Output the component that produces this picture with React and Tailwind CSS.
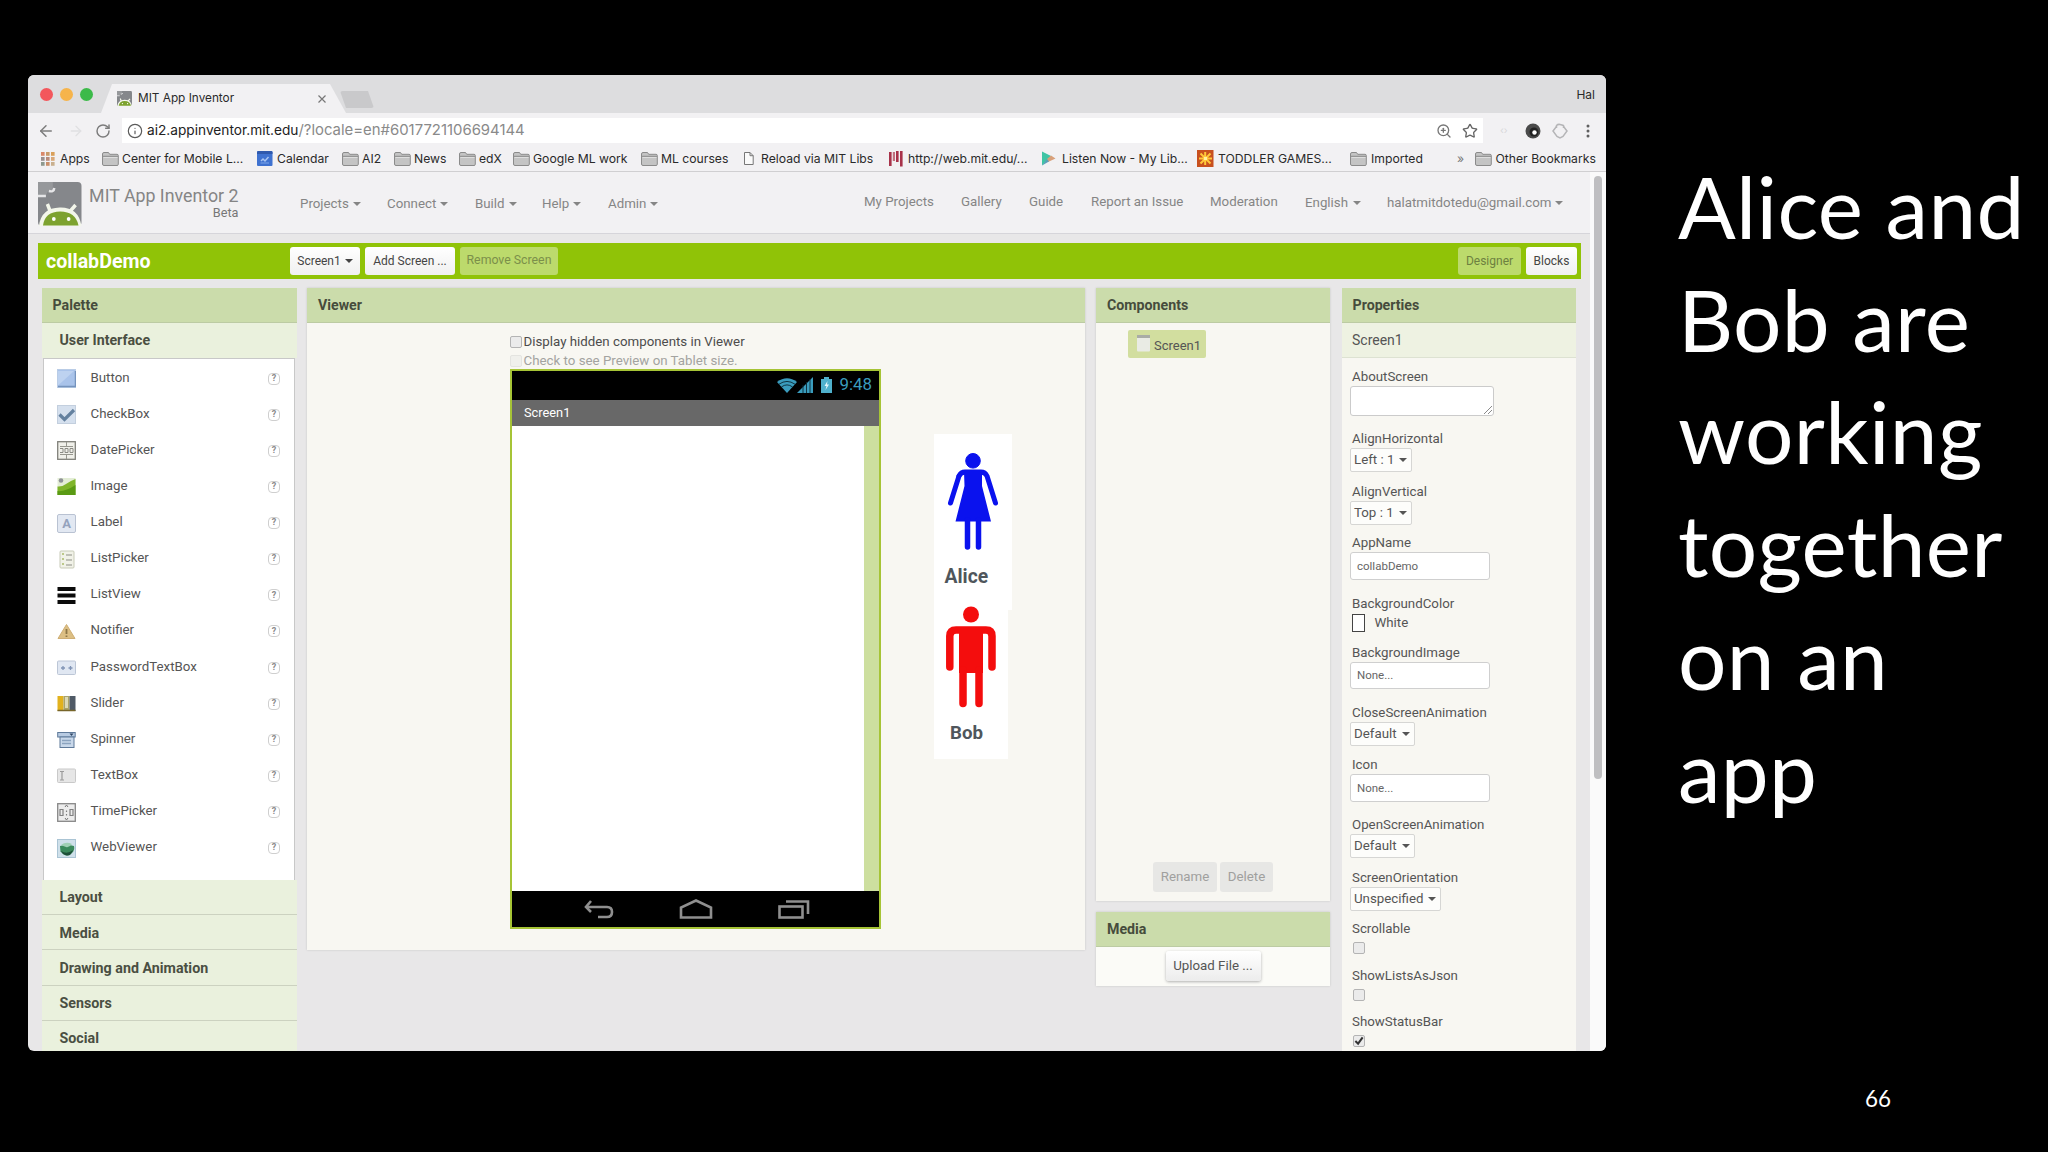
import { RotateCw, Info, ZoomIn, Star, ArrowLeft, ArrowRight } from "lucide-react"

const bookmarks = [
    { label: "Apps", icon: "apps", box: "w-[61px]", slot: "w-[19px]" },
    { label: "Center for Mobile L...", icon: "folder", box: "w-[155px]", slot: "w-[20px]" },
    { label: "Calendar", icon: "calendar", box: "w-[85px]", slot: "w-[20px]" },
    { label: "AI2", icon: "folder", box: "w-[52px]", slot: "w-[20px]" },
    { label: "News", icon: "folder", box: "w-[65px]", slot: "w-[20px]" },
    { label: "edX", icon: "folder", box: "w-[54px]", slot: "w-[20px]" },
    { label: "Google ML work", icon: "folder", box: "w-[128px]", slot: "w-[20px]" },
    { label: "ML courses", icon: "folder", box: "w-[103px]", slot: "w-[20px]" },
    { label: "Reload via MIT Libs", icon: "doc", box: "w-[145px]", slot: "w-[17px]" },
    { label: "http://web.mit.edu/...", icon: "mit", box: "w-[153px]", slot: "w-[19px]" },
    { label: "Listen Now - My Lib...", icon: "play", box: "w-[155px]", slot: "w-[20px]" },
    { label: "TODDLER GAMES...", icon: "toddler", box: "w-[153px]", slot: "w-[21px]" },
    { label: "Imported", icon: "folder", box: "w-[107px]", slot: "w-[21px]" },
]

const menus = [
    { label: "Projects", box: "w-[87px]" },
    { label: "Connect", box: "w-[88px]" },
    { label: "Build", box: "w-[67px]" },
    { label: "Help", box: "w-[66px]" },
    { label: "Admin", box: "w-[60px]" },
]

const links = [
    { label: "My Projects", box: "w-[97px]" },
    { label: "Gallery", box: "w-[68px]" },
    { label: "Guide", box: "w-[62px]" },
    { label: "Report an Issue", box: "w-[119px]" },
    { label: "Moderation", box: "w-[95px]" },
]

const palette = [
    "Button", "CheckBox", "DatePicker", "Image", "Label", "ListPicker", "ListView",
    "Notifier", "PasswordTextBox", "Slider", "Spinner", "TextBox", "TimePicker", "WebViewer",
]

const drawers = ["Layout", "Media", "Drawing and Animation", "Sensors", "Social"]

const properties = [
    { name: "AboutScreen", type: "area", box: "h-[62px]" },
    { name: "AlignHorizontal", type: "select", value: "Left : 1", box: "h-[52.5px]" },
    { name: "AlignVertical", type: "select", value: "Top : 1", box: "h-[51.5px]" },
    { name: "AppName", type: "text", value: "collabDemo", box: "h-[60.5px]" },
    { name: "BackgroundColor", type: "color", value: "White", box: "h-[49px]" },
    { name: "BackgroundImage", type: "text", value: "None...", box: "h-[60px]" },
    { name: "CloseScreenAnimation", type: "select", value: "Default", box: "h-[52.5px]" },
    { name: "Icon", type: "text", value: "None...", box: "h-[60px]" },
    { name: "OpenScreenAnimation", type: "select", value: "Default", box: "h-[52.5px]" },
    { name: "ScreenOrientation", type: "select", value: "Unspecified", box: "h-[51.5px]" },
    { name: "Scrollable", type: "check", box: "h-[46.5px]" },
    { name: "ShowListsAsJson", type: "check", box: "h-[46px]" },
    { name: "ShowStatusBar", type: "check", checked: true, box: "h-[40px]" },
]

function BookmarkIcon({ name }) {
    if (name === "apps") {
        const colors = ["#d9886a", "#c99a6a", "#d9a05a", "#9a8f8f", "#b88a7a", "#d9a878", "#8f9a8f", "#c98f6a", "#c9b08f"]
        return (
            <svg width="14" height="14" viewBox="0 0 14 14">
                {colors.map((c, i) => (
                    <rect key={i} x={(i % 3) * 5} y={Math.floor(i / 3) * 5} width="3.6" height="3.8" fill={c} />
                ))}
            </svg>
        )
    }
    if (name === "calendar") {
        return (
            <svg width="16" height="15" viewBox="0 0 16 15">
                <rect width="15.5" height="15" rx="1" fill="#3f72d0" />
                <path d="M0 1.5Q0 0 1.5 0H14Q15.500 0 15.500 1.500V3H0Z" fill="#2f59ad" />
                <path d="M4 10l2-2 2 2 3.500-4" stroke="#a8c4f2" strokeWidth="1.500" fill="none" />
                <path d="M3.500 12h8.500" stroke="#7ea6ea" strokeWidth="1" />
            </svg>
        )
    }
    if (name === "doc") {
        return (
            <svg width="10" height="13" viewBox="0 0 10 13" fill="#fafafa" stroke="#777" strokeWidth="1">
                <path d="M.5.5h5.500l3.200 3.200v8.800H.5z" />
                <path d="M6 .5v3.200h3.200" fill="none" />
            </svg>
        )
    }
    if (name === "mit") {
        return (
            <svg width="14" height="16" viewBox="0 0 14 16" fill="#a8324a">
                <rect x="0" y="1" width="2.600" height="14" />
                <rect x="3.800" y="1" width="2.200" height="9" fill="#c0707f" />
                <rect x="7" y="0" width="2.600" height="11" />
                <rect x="11" y="0" width="2.600" height="15.500" />
            </svg>
        )
    }
    if (name === "play") {
        return (
            <svg width="14" height="15" viewBox="0 0 14 15">
                <path d="M0 .5L9 5 6.500 8 0 14.500z" fill="#3fc4a4" />
                <path d="M9 4.500l4.500 3L6 11 5 8z" fill="#d8a07a" />
                <path d="M0 14.500L5 8l2 2.500z" fill="#5a9fb8" />
            </svg>
        )
    }
    if (name === "toddler") {
        return (
            <svg width="17" height="17" viewBox="0 0 17 17">
                <rect width="16.500" height="17" fill="#c8501e" />
                <path d="M8.200 2v13M2 8.500h13M3.500 3.500l10 10M13.500 3.500l-10 10" stroke="#ffc93a" strokeWidth="2" />
                <rect x="7" y="7" width="3" height="3" fill="#fff0a0" />
            </svg>
        )
    }
    return (
        <svg width="17" height="14" viewBox="0 0 17 14">
            <path d="M.5 2Q.5.5 2 .5h4.500l1.200 1.800H15q1.300 0 1.300 1.200v8.700q0 1.300-1.300 1.300H2Q.5 13.500.5 12z" fill="#c4c4c4" stroke="#8b8b8b" />
            <path d="M1 4.300h15" stroke="#8b8b8b" />
            <path d="M1.500 5.500h14" stroke="#dedede" />
        </svg>
    )
}

function ComponentIcon({ name }) {
    switch (name) {
        case "Button":
            return (
                <>
                    <rect x=".5" y=".5" width="18" height="18" fill="#a9c3ea" stroke="#b9cce6" />
                    <path d="M1 16.500V2h16z" fill="#bdd2f0" />
                    <path d="M1 17.500h17.500V2" stroke="#7593bd" strokeWidth="1.500" fill="none" />
                </>
            )
        case "CheckBox":
            return (
                <>
                    <rect x=".5" y=".5" width="18" height="18" fill="#d5e0ee" stroke="#c3cfde" />
                    <path d="M2.500 9.500l5 5 9.500-9.500" stroke="#64819f" strokeWidth="3.200" fill="none" />
                </>
            )
        case "DatePicker":
            return (
                <>
                    <rect x=".7" y=".7" width="17.600" height="17.600" fill="#f0f0ea" stroke="#80807a" strokeWidth="1.300" />
                    <path d="M9.500 1v4M9.500 14v4M3 5.500h13M3 13.500h13" stroke="#96968e" />
                    <path d="M3 7.500h3v4H3M8 7.500h3v4H8zM13 7.500h3v4h-3z" stroke="#8a8a84" fill="none" />
                </>
            )
        case "Image":
            return (
                <>
                    <rect x=".5" y="1" width="18" height="17" fill="#e3edd6" />
                    <path d="M.5 18V9.500Q5 10 9 7t9.500-5V18z" fill="#7fb52a" />
                    <path d="M.5 18v-4Q8 15 18.500 8v10z" fill="#5a9a14" />
                    <circle cx="4" cy="3.500" r="2.300" fill="#8f9296" />
                </>
            )
        case "Label":
            return (
                <>
                    <rect x=".5" y=".5" width="18" height="18" rx="1.500" fill="#e2e8f2" stroke="#b9c2d2" />
                    <text x="9.500" y="14" textAnchor="middle" fontSize="13" fontWeight="700" fontFamily="Roboto, sans-serif" fill="#94a2bd">A</text>
                </>
            )
        case "ListPicker":
            return (
                <>
                    <rect x="3" y="1" width="14" height="17" rx="1" fill="#f1f2e8" stroke="#c8cbb8" />
                    <path d="M5 4h2M5 9h2M5 14h2" stroke="#bcc98a" strokeWidth="2" />
                    <path d="M9 5h6M9 10h6M9 15h6" stroke="#aeb0a6" strokeWidth="1.300" />
                </>
            )
        case "ListView":
            return <path d="M.5 3h18M.5 9.500h18M.5 16h18" stroke="#0b0b0b" strokeWidth="3.800" />
        case "Notifier":
            return (
                <>
                    <path d="M9.500 2.500L18 16.500H1z" fill="#dcbf84" stroke="#cfae74" strokeLinejoin="round" />
                    <path d="M9.500 7v5M9.500 13.500v1.500" stroke="#8c7647" strokeWidth="1.800" />
                </>
            )
        case "PasswordTextBox":
            return (
                <>
                    <rect x=".5" y="3" width="18" height="13.500" rx="1" fill="#e0e7f2" stroke="#bcc6d6" />
                    <path d="M4 10h4M6 8v4M11.500 10h4M13.500 8v4" stroke="#8094b5" strokeWidth="1.300" />
                </>
            )
        case "Slider":
            return (
                <>
                    <rect x=".5" y="2" width="6" height="15" fill="#e2b21e" />
                    <rect x="6.500" y="2" width="6" height="15" fill="#a9a36c" />
                    <rect x="8" y="3" width="3" height="11" fill="#dcd9b8" />
                    <rect x="12.500" y="2" width="6" height="15" fill="#4f5a66" />
                    <path d="M.5 16.500h18" stroke="#77652a" strokeWidth="1.500" />
                </>
            )
        case "Spinner":
            return (
                <>
                    <rect x=".7" y="2.500" width="17.500" height="4.500" fill="#b8cbe2" stroke="#5f7a9a" />
                    <path d="M12.500 3.500h4l-2 2.500z" fill="#2f4664" />
                    <rect x="3" y="7" width="14" height="10.500" fill="#c9d8ea" stroke="#5f7a9a" />
                    <path d="M5 10.500h9M5 13.500h9" stroke="#8ba3bf" strokeWidth="1.300" />
                </>
            )
        case "TextBox":
            return (
                <>
                    <rect x=".5" y="3" width="18" height="13.500" rx="1" fill="#e6e6e6" stroke="#c9c9c9" />
                    <path d="M3 5.500h4M5 5.500v8.500M3 14h4" stroke="#9b9b9b" strokeWidth="1.200" />
                </>
            )
        case "TimePicker":
            return (
                <>
                    <rect x=".7" y=".7" width="17.600" height="17.600" fill="#ececec" stroke="#878787" strokeWidth="1.300" />
                    <path d="M8 4l1.500-2L11 4M8 15l1.500 2 1.500-2" stroke="#777" fill="none" />
                    <path d="M3 6.500h3v6H3zM13 6.500h3v6h-3zM9.500 7.500v1.500M9.500 11v1.500" stroke="#808080" strokeWidth="1.200" fill="none" />
                </>
            )
        default:
            return (
                <>
                    <rect x=".5" y=".5" width="18" height="18" fill="#cfe0ea" stroke="#aac4d4" />
                    <path d="M3 7Q10 5 17 7q1 4-2 7t-6 2.500-5.500-4z" fill="#3a8a5c" />
                    <path d="M4 6Q9 2 15 5q-3 4-6 3t-5-2z" fill="#9fd0b4" />
                    <path d="M4 12q6 4 12-1-2 6-6 5.500t-6-4.500z" fill="#1d4f38" />
                </>
            )
    }
}

function Logo({ className }) {
    return (
        <svg className={className} viewBox="0 0 44 44" preserveAspectRatio="none">
            <rect width="44" height="44" rx="4" fill="#85878b" />
            <path d="M0 0h15v7q-1 3-5 2.500L8 13H0z" fill="#96989b" />
            <path d="M0 14h8M11 9q5 1.500 5.500-3" stroke="#e6e6e8" strokeWidth="2.500" fill="none" />
            <path d="M3 44Q5 28 22 27.500T42 44z" fill="#f3f6ea" stroke="#f3f6ea" strokeWidth="4" />
            <path d="M13 31l-3.500-9M31 31l7-8" stroke="#f3f6ea" strokeWidth="3.500" />
            <path d="M5 43.500Q7 29.500 22.500 29.500T41 43.500z" fill="#7da22f" />
            <circle cx="16" cy="37" r="1.900" fill="#fff" />
            <circle cx="31" cy="37" r="1.900" fill="#fff" />
        </svg>
    )
}

function Caret({ className = "" }) {
    return <span className={`inline-block border-x-4 border-t-4 border-x-transparent border-t-current ${className}`} />
}

function PanelHeader({ children }) {
    return (
        <div className="flex h-[35px] shrink-0 items-center border-b border-[#bccba3] bg-[#cbdcab] px-[11px] pt-[2px] text-[14.2px] font-bold text-[#464c3c]">
            {children}
        </div>
    )
}

function Check({ checked }) {
    return (
        <span className="flex size-3 items-center justify-center rounded-[2px] border border-[#b4b4b4] bg-[#ebebeb]">
            {checked && (
                <svg width="11" height="11" viewBox="0 0 11 11">
                    <path d="M1.500 6l3 3L9.500 2" stroke="#333" strokeWidth="2.200" fill="none" />
                </svg>
            )}
        </span>
    )
}

function PropertyEditor({ type, value, checked }) {
    if (type === "area") {
        return (
            <div className="mt-px ml-[-2px] flex h-[30px] w-36 items-end justify-end rounded-[3px] border border-[#cbcbcb] bg-white p-px">
                <svg width="8" height="8" viewBox="0 0 8 8" stroke="#8a8a8a">
                    <path d="M0 8l8-8M4 8l4-4" />
                </svg>
            </div>
        )
    }
    if (type === "select") {
        return (
            <div className="mt-px ml-[-2px] inline-flex h-6 items-center rounded-[2px] border border-[#d6d6d4] bg-[#fdfdfb] pr-[4px] pl-[3px] whitespace-pre">
                {value}
                <Caret className="ml-[5px]" />
            </div>
        )
    }
    if (type === "text") {
        return (
            <div className="mt-px ml-[-2px] flex h-[27.5px] w-[140px] items-center rounded-[3px] border border-[#cfcfcf] bg-white pl-[6px] text-[11.5px] text-[#666]">
                {value}
            </div>
        )
    }
    if (type === "color") {
        return (
            <div className="mt-[2px] flex items-center">
                <span className="mr-[9.5px] h-[18px] w-[13px] border-[1.5px] border-[#444] bg-white" />
                {value}
            </div>
        )
    }
    return <div className="mt-[5px] ml-[.5px]"><Check checked={checked} /></div>
}

function BrowserChrome() {
    return (
        <div className="shrink-0 font-['Inter',sans-serif] text-[12.2px] text-[#2a2a2a]">
            <div className="flex h-[38px] bg-[#dddddf]">
                <div className="mt-[13px] ml-3 flex gap-[7px]">
                    <span className="size-[13px] rounded-full bg-[#f3575c]" />
                    <span className="size-[13px] rounded-full bg-[#f6b44b]" />
                    <span className="size-[13px] rounded-full bg-[#3cba49]" />
                </div>
                <div className="mt-[9px] ml-[8px] flex h-[29px] w-[245px] items-center bg-[#f2f1f3] [clip-path:polygon(11px_0,229px_0,245px_100%,0_100%)]">
                    <Logo className="ml-[16px] h-[15px] w-[15px]" />
                    <span className="ml-[6px] text-[11.8px]">MIT App Inventor</span>
                    <svg className="ml-[84px]" width="8" height="8" viewBox="0 0 8 8" stroke="#777" strokeWidth="1.200">
                        <path d="M.5.5l7 7M7.500.5l-7 7" />
                    </svg>
                </div>
                <div className="mt-[16px] ml-[-6px] h-[17px] w-[34px] rounded-[3px] bg-[#c9c9cb] [clip-path:polygon(0_0,28px_0,34px_100%,6px_100%)]" />
                <span className="mt-[11px] mr-[11px] ml-auto text-[12px]">Hal</span>
            </div>
            <div className="flex h-[31px] items-center bg-[#f2f1f3] pt-[4px]">
                <ArrowLeft className="ml-[9px] text-[#7d7d7d]" size={18} strokeWidth={2} />
                <ArrowRight className="ml-[13px] text-[#e0e0e2]" size={16} strokeWidth={2} />
                <RotateCw className="ml-[11px] text-[#7c7c7c]" size={16} strokeWidth={2.2} />
                <div className="ml-[11px] flex h-[25px] w-[1361px] items-center bg-white">
                    <Info className="ml-[5px] text-[#5c5c5c]" size={16} strokeWidth={1.800} />
                    <span className="ml-[4px] text-[13.7px] text-[#222]">ai2.appinventor.mit.edu</span>
                    <span className="text-[14.9px] text-[#8a8a8a]">/?locale=en#6017721106694144</span>
                    <ZoomIn className="mr-[10px] ml-auto text-[#777]" size={16} strokeWidth={2} />
                    <Star className="mr-[5px] text-[#666]" size={16} strokeWidth={2} />
                </div>
                <span className="ml-[17px] text-[10px] text-[#d8d8da]">‹›</span>
                <svg className="ml-[17px]" width="16" height="16" viewBox="0 0 16 16">
                    <circle cx="8" cy="8" r="7.500" fill="#4a4a4a" />
                    <circle cx="9" cy="9" r="4.500" fill="#222" />
                    <circle cx="9.500" cy="9.500" r="2.200" fill="#fff" />
                </svg>
                <svg className="ml-[11px]" width="16" height="16" viewBox="0 0 16 16" fill="none" stroke="#b5b5b7" strokeWidth="1.500">
                    <path d="M4.500 3.500L1 8l4 5.500 3 1.500 3-1.500L15 8l-3.500-4.500" />
                    <path d="M4.500 5V2.500Q6 1 8 1.500t3.500 1V5" />
                </svg>
                <svg className="ml-[18px]" width="4" height="14" viewBox="0 0 4 14" fill="#5f5f5f">
                    <circle cx="2" cy="2" r="1.500" />
                    <circle cx="2" cy="7" r="1.500" />
                    <circle cx="2" cy="12" r="1.500" />
                </svg>
            </div>
            <div className="flex h-7 items-center border-b border-[#d0cfd1] bg-[#f2f1f3] pt-[3px] pl-[13px] whitespace-nowrap">
                {bookmarks.map((b) => (
                    <div key={b.label} className={`flex shrink-0 items-center ${b.box}`}>
                        <span className={`shrink-0 ${b.slot}`}><BookmarkIcon name={b.icon} /></span>
                        {b.label}
                    </div>
                ))}
                <span className="w-[18px] text-[#777]">»</span>
                <span className="w-[20.5px] shrink-0"><BookmarkIcon name="folder" /></span>
                Other Bookmarks
            </div>
        </div>
    )
}

function Palette() {
    return (
        <div className="flex w-[255px] flex-col">
            <PanelHeader>Palette</PanelHeader>
            <div className="flex h-[35px] shrink-0 items-center bg-[#eaf1dd] pt-px pl-[18px] text-[14.2px] font-bold text-[#4a4f42]">User Interface</div>
            <div className="mx-[1.5px] h-[522.5px] shrink-0 border-x border-t border-[#c8c8c8] bg-white pt-[2px]">
                {palette.map((name) => (
                    <div key={name} className="flex h-[36.14px] items-center pr-[14px] pl-[13px]">
                        <svg width="19" height="19" viewBox="0 0 19 19" fill="none">
                            <ComponentIcon name={name} />
                        </svg>
                        <span className="mb-[2px] ml-[14.5px]">{name}</span>
                        <span className="ml-auto flex size-[12px] items-center justify-center rounded-[4px] border border-[#cfcfcf] text-[9px] font-bold text-[#8a8a8a]">?</span>
                    </div>
                ))}
            </div>
            {drawers.map((name) => (
                <div key={name} className="flex h-[35.2px] shrink-0 items-center border-b border-[#ccd2c0] bg-[#eaf1dd] pt-[2px] pl-[18px] text-[14.25px] font-bold text-[#4a4f42]">{name}</div>
            ))}
        </div>
    )
}

function Phone() {
    return (
        <div className="flex h-[560px] w-[371.5px] flex-col border-2 border-[#a6c436] bg-white">
            <div className="flex h-[29px] items-center bg-black pr-[7px] text-[16.9px] text-[#3a9cbd]">
                <svg className="ml-auto" width="20" height="15" viewBox="0 0 20 15" fill="#3a9cbd">
                    <path d="M0 4Q10-3.500 20 4L10 15z" />
                    <path d="M2 6.200q8-5.500 16 0M4.500 8.900q5.500-4 11 0" stroke="#0b2833" strokeWidth=".9" fill="none" />
                </svg>
                <svg width="16" height="16" viewBox="0 0 16 16" fill="#3a9cbd">
                    <path d="M0 16L16 0v16z" />
                    <path d="M6 8v8M9.500 5v11M13 2v14" stroke="#0b2833" strokeWidth=".9" />
                </svg>
                <svg className="ml-[8px]" width="11" height="16" viewBox="0 0 11 16">
                    <path d="M3 0h5v2h3v14H0V2h3z" fill="#4fb0cc" />
                    <path d="M6.500 4L3.500 9h2L4.500 13 8 7.500H6z" fill="#e6f7fb" />
                </svg>
                <span className="ml-[7px]">9:48</span>
            </div>
            <div className="flex h-[26.5px] items-center bg-[#686868] pb-px pl-[12.5px] text-[12.8px] text-white">Screen1</div>
            <div className="flex flex-1 justify-end">
                <div className="w-[15px] bg-[#cddf9f]" />
            </div>
            <div className="flex h-[36px] items-center bg-black">
                <svg className="ml-[71px]" width="31" height="20" viewBox="0 0 31 20" fill="none" stroke="#8f8f8f" strokeWidth="2.600">
                    <path d="M3 8h21q5 0 5 5t-5 5H15" />
                    <path d="M8 2L3 8l5 5" />
                </svg>
                <svg className="ml-[65.5px]" width="34" height="20" viewBox="0 0 34 20" fill="none" stroke="#8f8f8f" strokeWidth="2.600">
                    <path d="M2 18.500V8.500L17 1.500 32 8.500v10z" />
                </svg>
                <svg className="ml-[65px]" width="32" height="20" viewBox="0 0 32 20" fill="none" stroke="#8f8f8f" strokeWidth="2.600">
                    <rect x="1.500" y="7.500" width="23" height="11" />
                    <path d="M8 2.500h22V15" />
                </svg>
            </div>
        </div>
    )
}

function Viewer() {
    return (
        <div className="ml-[10.5px] h-[662px] w-[778px] shrink-0 bg-[#f8f7f2] shadow-[0_0_2px_#c4c4c4]">
            <PanelHeader>Viewer</PanelHeader>
            <div className="pt-[10px] pl-[202.5px] text-[#4c4c4c]">
                <div className="flex h-[18.5px] items-center"><Check /><span className="ml-[2px]">Display hidden components in Viewer</span></div>
                <div className="flex h-[17.5px] items-center pt-[3px] text-[#a3a3a0]">
                    <span className="size-3 rounded-[2px] border border-[#e4e4e0] bg-[#f0f0ec]" />
                    <span className="ml-[2px]">Check to see Preview on Tablet size.</span>
                </div>
                <div className="flex items-start">
                    <Phone />
                    <div className="mt-[65px] ml-[52.5px] font-bold text-[#4f565c]">
                        <div className="flex h-[176px] w-[78px] flex-col bg-white pl-[11px]">
                            <svg className="mt-[18px] ml-[2px] shrink-0" width="52" height="98" viewBox="0 0 52 98" fill="#0a12ee" stroke="#0a12ee">
                                <circle cx="26" cy="8.800" r="7.300" />
                                <path d="M12 24Q14 20 18 20H34Q38 20 40 24L48.500 51" fill="none" strokeWidth="5" strokeLinecap="round" />
                                <path d="M12 24L3.500 51" strokeWidth="5" strokeLinecap="round" />
                                <path d="M17 19.500H35V34L44 69.500H8.500L17.500 34z" stroke="none" />
                                <path d="M20.500 68v27M31.500 68v27" strokeWidth="5.500" strokeLinecap="round" />
                            </svg>
                            <span className="mt-[15px] text-[19.3px] leading-6">Alice</span>
                        </div>
                        <div className="flex h-[149px] w-[74px] flex-col bg-white pl-[11px]">
                            <svg className="mt-[-4px] shrink-0" width="52" height="102" viewBox="0 0 52 102" fill="#f40d0d" stroke="#f40d0d">
                                <circle cx="26" cy="8.500" r="8" stroke="none" />
                                <path d="M4.800 61V30Q5 24 11 24H41Q47 24 47 30V61" fill="none" strokeWidth="7.500" strokeLinecap="round" />
                                <path d="M14 21h24v46H14z" stroke="none" />
                                <path d="M18 64v33.500M34 64v33.500" strokeWidth="7.500" strokeLinecap="round" />
                            </svg>
                            <span className="mt-[13px] ml-[5.5px] text-[18.7px] leading-6">Bob</span>
                        </div>
                    </div>
                </div>
            </div>
        </div>
    )
}

function Components() {
    return (
        <div className="ml-[11px] w-[234px] shrink-0">
            <div className="flex h-[613.5px] flex-col bg-[#f8f7f2] shadow-[0_0_2px_#c4c4c4]">
                <PanelHeader>Components</PanelHeader>
                <div className="mt-[7px] ml-8 flex h-7 w-[78px] items-center rounded-[2px] bg-[#d2de9f]">
                    <svg className="ml-[9px]" width="13" height="17" viewBox="0 0 13 17">
                        <rect y=".5" width="13" height="16" rx="1" fill="#e9ebe4" />
                        <rect width="13" height="3" fill="#a9aca6" />
                    </svg>
                    <span className="mt-[4px] ml-1 text-[13px]">Screen1</span>
                </div>
                <div className="mt-auto mb-[9px] ml-[57px] flex gap-[3px] text-[#a0a09e]">
                    <span className="flex h-[30px] w-[64px] items-center justify-center rounded-[3px] bg-[#e7e7e5]">Rename</span>
                    <span className="flex h-[30px] w-[53px] items-center justify-center rounded-[3px] bg-[#e7e7e5]">Delete</span>
                </div>
            </div>
            <div className="mt-[11px] h-[74px] bg-[#fbfbf7] shadow-[0_0_2px_#c4c4c4]">
                <PanelHeader>Media</PanelHeader>
                <span className="mx-auto mt-[4px] flex h-[29.5px] w-[95px] items-center justify-center rounded-[3px] bg-gradient-to-b from-white to-[#ececec] shadow-[0_1px_3px_#b0b0b0]">Upload File ...</span>
            </div>
        </div>
    )
}

function Properties() {
    return (
        <div className="ml-[11.5px] w-[234px] shrink-0 bg-[#f8f7f2]">
            <PanelHeader>Properties</PanelHeader>
            <div className="mb-[11px] flex h-[35.500px] items-center border-b border-[#dde2d2] bg-[#eef2e2] pt-px pl-[10.5px] text-[14px]">Screen1</div>
            {properties.map((p) => (
                <div key={p.name} className={`pl-[10.5px] leading-4 ${p.box}`}>
                    <p>{p.name}</p>
                    <PropertyEditor type={p.type} value={p.value} checked={p.checked} />
                </div>
            ))}
        </div>
    )
}

export default function App() {
    return (
        <div className="flex h-[1152px] w-[2048px] overflow-hidden bg-black">
            <div className="mt-[75px] ml-7 flex h-[976px] w-[1578px] shrink-0 flex-col overflow-hidden rounded-[6px] bg-[#e8e7e8] font-['Roboto',sans-serif] text-[13.3px] text-[#555]">
                <BrowserChrome />
                <div className="flex min-h-0 flex-1">
                    <div className="w-[1562px]">
                        <div className="flex h-[62px] border-b border-[#d6d5da] bg-[#f2f1f3] whitespace-nowrap text-[#858585]">
                            <Logo className="mt-[10px] ml-[10px] h-[44px] w-[43.5px]" />
                            <div className="mt-[12px] ml-[7px] w-[150px] text-right">
                                <p className="text-[17.8px] leading-[23px]">MIT App Inventor 2</p>
                                <p className="mt-[-2px] text-[12.7px] leading-[15px] text-[#777]">Beta</p>
                            </div>
                            <div className="ml-[61.5px] flex h-[63px] items-center">
                                {menus.map((m) => (
                                    <div key={m.label} className={`flex items-center ${m.box}`}>{m.label}<Caret className="ml-1" /></div>
                                ))}
                            </div>
                            <div className="ml-auto flex h-[60px] items-center">
                                {links.map((l) => (
                                    <span key={l.label} className={l.box}>{l.label}</span>
                                ))}
                                <span className="mt-[2px] flex w-[82px] items-center">English<Caret className="ml-[5px]" /></span>
                                <span className="mt-[2px] flex w-[203px] items-center">halatmitdotedu@gmail.com<Caret className="ml-1" /></span>
                            </div>
                        </div>
                        <div className="mt-[8.5px] ml-[9.5px] flex h-9 w-[1543.5px] items-center bg-[#90c307] text-[12px] text-[#444]">
                            <span className="w-[252.5px] pt-[3px] pl-[8.5px] text-[19.6px] font-bold text-white">collabDemo</span>
                            <span className="flex h-7 w-[70px] items-center justify-center rounded-[3px] bg-gradient-to-b from-white to-[#f0f0f0]">Screen1<Caret className="ml-1" /></span>
                            <span className="ml-[5px] flex h-7 w-[90px] items-center justify-center rounded-[3px] bg-gradient-to-b from-white to-[#f0f0f0]">Add Screen ...</span>
                            <span className="ml-[5px] flex h-7 w-[98px] items-center justify-center rounded-[3px] bg-[#bcda6c] text-[12.300px] text-[#7b8f4a]">Remove Screen</span>
                            <span className="mr-[5px] ml-auto flex h-7 w-[63px] items-center justify-center rounded-[3px] bg-[#bcda6c] text-[#6d8040]">Designer</span>
                            <span className="mr-[4px] flex h-7 w-[51px] items-center justify-center rounded-[3px] bg-gradient-to-b from-white to-[#f0f0f0]">Blocks</span>
                        </div>
                        <div className="mt-[9px] ml-[13.5px] flex items-start">
                            <Palette />
                            <Viewer />
                            <Components />
                            <Properties />
                        </div>
                    </div>
                    <div className="flex flex-1 justify-center bg-[#fafafa] pt-[4px]">
                        <div className="h-[603px] w-2 rounded-full bg-[#bfbfc1]" />
                    </div>
                </div>
            </div>
            <div className="ml-[72px] flex flex-col font-['Lato',sans-serif] text-white">
                <h1 className="mt-[150px] text-[85.5px] leading-[112.7px] tracking-[.35px] whitespace-nowrap">
                    Alice and<br />Bob are<br />working<br />together<br />on an<br />app
                </h1>
                <span className="mt-[259px] ml-[187px] text-[22.4px] leading-[28px]">66</span>
            </div>
        </div>
    )
}
